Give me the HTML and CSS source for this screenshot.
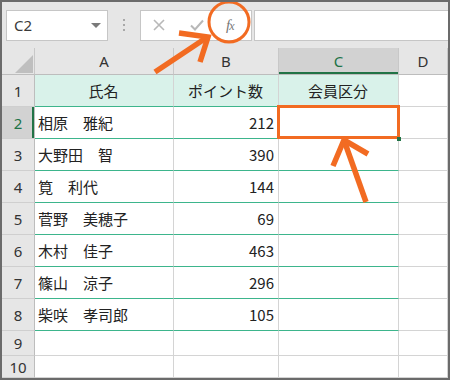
FILE: index.html
```html
<!DOCTYPE html>
<html lang="ja">

<head>
    <meta charset="UTF-8">
    <title>会員区分</title>
    <link rel="stylesheet" href="styles.css">
</head>

<body>

    <div class="window">
        <!-- Formula bar -->
        <div class="formula-bar">
            <div class="name-box">
                <span>C2</span>
                <span class="drop"></span>
            </div>
            <div class="dots"><i></i><i></i><i></i></div>
            <div class="fx-buttons">
                <svg class="btn" width="12" height="12" viewBox="0 0 12 12">
                    <path d="M1 1 L11 11 M11 1 L1 11" stroke="#b8b8b8" stroke-width="1.6" fill="none"/>
                </svg>
                <svg class="btn" width="14" height="12" viewBox="0 0 14 12">
                    <path d="M1 6.5 L5 10.5 L13 1.5" stroke="#b8b8b8" stroke-width="2" fill="none"/>
                </svg>
                <span class="fx">f<small>x</small></span>
            </div>
            <div class="formula-input"></div>
        </div>

        <!-- Sheet -->
        <div class="sheet">
            <div class="hd corner"><span class="tri"></span></div>
            <div class="hd">A</div>
            <div class="hd">B</div>
            <div class="hd active">C</div>
            <div class="hd">D</div>

            <div class="rh">1</div>
            <div class="cell head">氏名</div>
            <div class="cell head">ポイント数</div>
            <div class="cell head">会員区分</div>
            <div class="cell"></div>

            <div class="rh active">2</div>
            <div class="cell tb">相原　雅紀</div>
            <div class="cell tb num">212</div>
            <div class="cell tb selected"></div>
            <div class="cell"></div>

            <div class="rh">3</div>
            <div class="cell tb">大野田　智</div>
            <div class="cell tb num">390</div>
            <div class="cell tb"></div>
            <div class="cell"></div>

            <div class="rh">4</div>
            <div class="cell tb">筧　利代</div>
            <div class="cell tb num">144</div>
            <div class="cell tb"></div>
            <div class="cell"></div>

            <div class="rh">5</div>
            <div class="cell tb">菅野　美穂子</div>
            <div class="cell tb num">69</div>
            <div class="cell tb"></div>
            <div class="cell"></div>

            <div class="rh">6</div>
            <div class="cell tb">木村　佳子</div>
            <div class="cell tb num">463</div>
            <div class="cell tb"></div>
            <div class="cell"></div>

            <div class="rh">7</div>
            <div class="cell tb">篠山　涼子</div>
            <div class="cell tb num">296</div>
            <div class="cell tb"></div>
            <div class="cell"></div>

            <div class="rh">8</div>
            <div class="cell tb">柴咲　孝司郎</div>
            <div class="cell tb num">105</div>
            <div class="cell tb"></div>
            <div class="cell"></div>

            <div class="rh">9</div>
            <div class="cell"></div>
            <div class="cell"></div>
            <div class="cell"></div>
            <div class="cell"></div>

            <div class="rh">10</div>
            <div class="cell"></div>
            <div class="cell"></div>
            <div class="cell"></div>
            <div class="cell"></div>
        </div>

        <!-- Annotation overlay -->
        <svg class="marks" width="450" height="380" viewBox="0 0 450 380">
            <circle cx="229" cy="22" r="20" stroke="#f26b22" stroke-width="3" fill="none"/>
            <g stroke="#f26b22" stroke-width="5.5" stroke-linecap="butt" fill="none">
                <path d="M155 72 L206 38"/>
                <path d="M179 33 L208 37 L200 62"/>
                <path d="M366 202 L345 143"/>
                <path d="M333 166 L344 140 L368 154"/>
            </g>
        </svg>
    </div>

</body>

</html>
```

FILE: styles.css
```css
body {
    margin: 0;
    padding: 0;
    background-color: #fff;
}

.window {
    position: relative;
    width: 446px;
    height: 376px;
    border: 2px solid #6b6b6b;
    background-color: #fff;
    overflow: hidden;
    font-family: "Noto Sans CJK JP", "Noto Sans", sans-serif;
    color: #222;
}

/* formula bar */
.formula-bar {
    height: 46px;
    background-color: #e6e6e6;
    display: flex;
    align-items: center;
    padding: 0 0 0 4px;
    box-sizing: border-box;
}

.name-box {
    width: 102px;
    height: 31px;
    box-sizing: border-box;
    background-color: #fff;
    border: 1px solid #c6c6c6;
    display: flex;
    align-items: center;
    justify-content: space-between;
    padding: 0 6px 0 7px;
    font-family: "Noto Sans", sans-serif;
    font-size: 15px;
    color: #3a3a3a;
}

.drop {
    width: 0;
    height: 0;
    border-left: 5px solid transparent;
    border-right: 5px solid transparent;
    border-top: 5px solid #7a7a7a;
}

.dots {
    width: 32px;
    display: flex;
    flex-direction: column;
    align-items: center;
    gap: 3px;
}

.dots i {
    display: block;
    width: 2px;
    height: 2px;
    background-color: #a8a8a8;
}

.fx-buttons {
    width: 112px;
    height: 31px;
    box-sizing: border-box;
    background-color: #fff;
    border: 1px solid #c6c6c6;
    display: flex;
    align-items: center;
    padding-left: 12px;
    gap: 25px;
}

.fx {
    font-family: "Liberation Serif", serif;
    font-style: italic;
    font-size: 15px;
    color: #777;
    margin-left: -3px;
    letter-spacing: -1px;
}

.fx small {
    font-size: 12px;
}

.formula-input {
    flex: 1;
    height: 31px;
    box-sizing: border-box;
    margin-left: 2px;
    background-color: #fff;
    border: 1px solid #c6c6c6;
    border-right: none;
}

/* sheet grid */
.sheet {
    display: grid;
    grid-template-columns: 33px 139px 105px 120px 1fr;
    grid-template-rows: 27px repeat(8, 32px) 25px 22px;
    font-size: 15px;
}

.sheet > div {
    box-sizing: border-box;
    border-right: 1px solid #d4d4d4;
    border-bottom: 1px solid #d4d4d4;
    display: flex;
    align-items: center;
}

.hd {
    background-color: #e6e6e6;
    justify-content: center;
    font-family: "Noto Sans", sans-serif;
    color: #333;
    border-right-color: #c8c8c8 !important;
    border-bottom-color: #bdbdbd !important;
}

.hd.active {
    background-color: #d2d2d2;
    color: #217346;
    box-shadow: inset 0 -2px 0 #217346;
}

.corner {
    position: relative;
}

.tri {
    position: absolute;
    right: 1px;
    bottom: 1px;
    width: 0;
    height: 0;
    border-left: 18px solid transparent;
    border-bottom: 18px solid #bfbfbf;
}

.rh {
    background-color: #e6e6e6;
    justify-content: center;
    font-family: "Noto Sans", sans-serif;
    color: #333;
    border-right-color: #bdbdbd !important;
    border-bottom-color: #cfcfcf !important;
}

.rh.active {
    background-color: #d2d2d2;
    color: #217346;
    box-shadow: inset -2px 0 0 #217346;
}

.cell {
    padding: 0 4px 0 3px;
    white-space: nowrap;
}

.cell.head {
    background-color: #d9f2ea;
    justify-content: center;
    border-bottom-color: #3db58c;
}

.cell.tb {
    border-bottom-color: #3db58c;
}

.num {
    justify-content: flex-end;
}

.selected {
    position: relative;
}

.selected::after {
    content: "";
    position: absolute;
    top: -2px;
    left: -2px;
    right: -2px;
    bottom: -1px;
    border: 3px solid #f26b22;
}

.selected::before {
    content: "";
    position: absolute;
    right: -3px;
    bottom: -3px;
    width: 4px;
    height: 4px;
    background-color: #217346;
    z-index: 1;
}

/* annotation overlay */
.marks {
    position: absolute;
    top: -2px;
    left: -2px;
    pointer-events: none;
}
```
